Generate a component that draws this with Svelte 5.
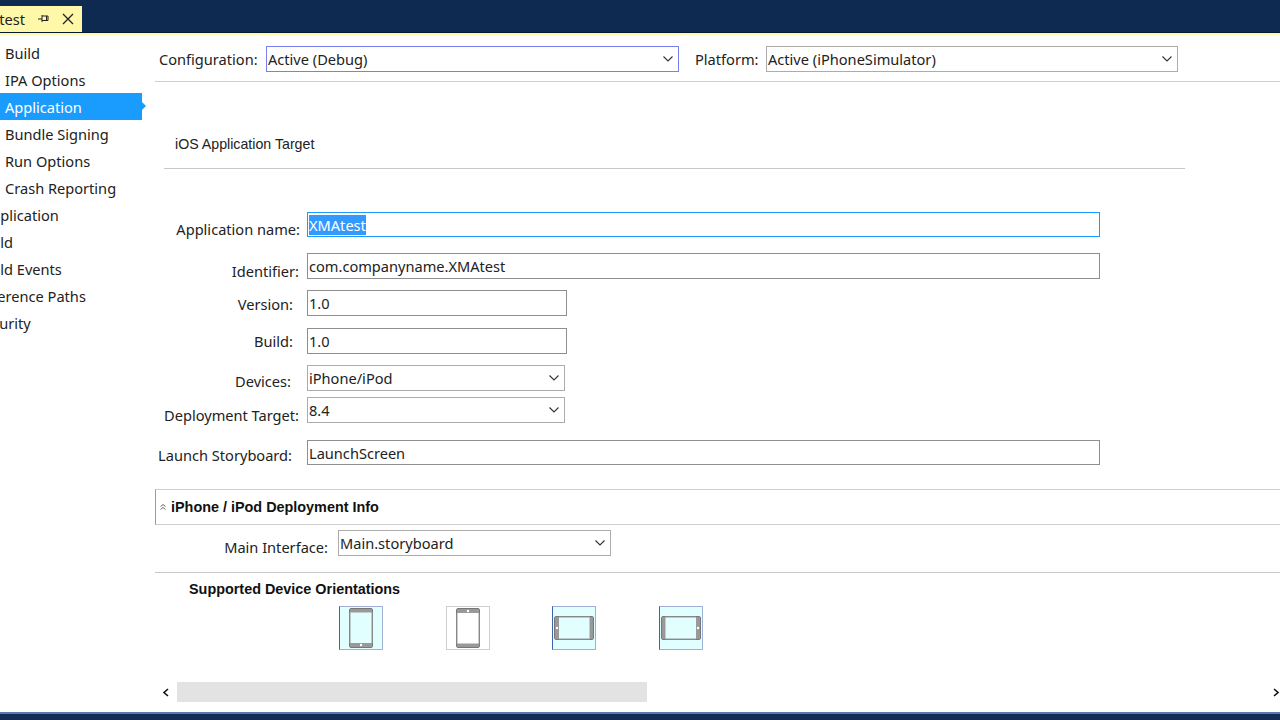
<script>
  const navTop = ['Build', 'IPA Options', 'Application', 'Bundle Signing', 'Run Options', 'Crash Reporting'];
  const navClipped = [
    { name: 'Application', cls: 'app' },
    { name: 'Build', cls: '' },
    { name: 'Build Events', cls: '' },
    { name: 'Reference Paths', cls: 'ref' },
    { name: 'Security', cls: 'sec' }
  ];
  const orientations = [
    { rotate: 0, on: true },
    { rotate: 180, on: false },
    { rotate: 90, on: true },
    { rotate: -90, on: true }
  ];
</script>

{#snippet chevron()}
  <svg class="chevron" width="10" height="6" viewBox="0 0 10 6" aria-hidden="true">
    <path d="M0.5 0.5 L5 5 L9.5 0.5" fill="none" stroke="#333" stroke-width="1.1" />
  </svg>
{/snippet}

<div class="page">
  <header class="titlebar">
    <div class="tab">
      <span class="tab-name"><span>XMAtest</span></span>
      <svg class="pin" width="12" height="10" viewBox="0 0 12 10" aria-hidden="true">
        <path d="M0 5 H4 M4 1 V8 M4 2 H10 V6.5 H4 M8.5 2 V6.5" fill="none" stroke="#222" stroke-width="1" />
      </svg>
      <svg class="close" width="12" height="12" viewBox="0 0 12 12" aria-hidden="true">
        <path d="M1 1 L11 11 M11 1 L1 11" fill="none" stroke="#222" stroke-width="1.3" />
      </svg>
    </div>
  </header>
  <div class="accent"></div>

  <div class="main">
    <nav class="sidebar">
      {#each navTop as item}
        <div class="nav-item" class:active={item === 'Application'}>{item}</div>
      {/each}
      {#each navClipped as item}
        <div class="nav-item clipped {item.cls}">{item.name}</div>
      {/each}
    </nav>

    <section class="content">
      <div class="config">
        <span class="config-label">Configuration:</span>
        <div class="field select config-select">Active (Debug){@render chevron()}</div>
        <span class="platform-label">Platform:</span>
        <div class="field select platform-select">Active (iPhoneSimulator){@render chevron()}</div>
      </div>

      <h2 class="target">iOS Application Target</h2>
      <div class="target-rule"></div>

      <div class="row r-name">
        <span class="label">Application name:</span>
        <div class="field wide selected-field"><span class="selection">XMAtest</span></div>
      </div>
      <div class="row r-identifier">
        <span class="label">Identifier:</span>
        <div class="field wide">com.companyname.XMAtest</div>
      </div>
      <div class="row r-version">
        <span class="label">Version:</span>
        <div class="field short-field">1.0</div>
      </div>
      <div class="row r-build">
        <span class="label">Build:</span>
        <div class="field short-field">1.0</div>
      </div>
      <div class="row r-devices">
        <span class="label">Devices:</span>
        <div class="field select combo">iPhone/iPod{@render chevron()}</div>
      </div>
      <div class="row r-target">
        <span class="label">Deployment Target:</span>
        <div class="field select combo">8.4{@render chevron()}</div>
      </div>
      <div class="row r-launch">
        <span class="label">Launch Storyboard:</span>
        <div class="field wide">LaunchScreen</div>
      </div>

      <div class="section-head">
        <svg width="6" height="6" viewBox="0 0 6 6" aria-hidden="true">
          <path d="M0.5 2.5 L3 0.5 L5.5 2.5 M0.5 5.5 L3 3.5 L5.5 5.5" fill="none" stroke="#555" stroke-width="0.9" />
        </svg>
        <strong>iPhone / iPod Deployment Info</strong>
      </div>

      <div class="row r-main">
        <span class="label">Main Interface:</span>
        <div class="field select main-select">Main.storyboard{@render chevron()}</div>
      </div>
      <div class="main-rule"></div>

      <h3 class="orient-title">Supported Device Orientations</h3>
      <div class="orient-row">
        {#each orientations as o}
          <div class="orient" class:on={o.on}>
            <svg width="42" height="42" viewBox="1 1 42 42" aria-hidden="true">
              <g transform={`rotate(${o.rotate} 22 22)`}>
                <rect x="10.5" y="2.5" width="23" height="39" rx="1.5" fill={o.on ? '#e1ffff' : '#fff'} stroke="#777" />
                <path d="M11 3 H33 V6.5 H11 Z M11 37 H33 V41 H11 Z" fill="#999" />
                <path d="M11 6 V37 M33 6 V37" stroke="#999" stroke-width="1" />
                <circle cx="22" cy="39" r="1.2" fill="#fff" />
              </g>
            </svg>
          </div>
        {/each}
      </div>

      <div class="scrollbar">
        <svg class="arrow" width="7" height="9" viewBox="0 0 7 9" aria-hidden="true">
          <path d="M6 1 L2 4.5 L6 8" fill="none" stroke="#111" stroke-width="1.6" />
        </svg>
        <div class="track"><div class="thumb"></div></div>
        <svg class="arrow" width="7" height="9" viewBox="0 0 7 9" aria-hidden="true">
          <path d="M1 1 L5 4.5 L1 8" fill="none" stroke="#111" stroke-width="1.6" />
        </svg>
      </div>
    </section>
  </div>

  <footer class="statusbar"></footer>
</div>

<style>
  :global(body) {
    margin: 0;
    background: #fff;
    font-family: 'Noto Sans', 'Open Sans', sans-serif;
    font-size: 14.6px;
    color: #222;
  }

  .page {
    width: 1280px;
    height: 720px;
    display: flex;
    flex-direction: column;
    overflow: hidden;
  }

  .titlebar {
    height: 33px;
    flex: none;
    background: #0e2a50;
    display: flex;
    align-items: flex-end;
    border-bottom: 1px solid #061a33;
    box-sizing: border-box;
  }

  .tab {
    width: 82px;
    height: 26px;
    background: #fff8a8;
    display: flex;
    align-items: center;
    flex: none;
  }

  .tab-name {
    width: 25px;
    overflow: hidden;
    display: flex;
    justify-content: flex-end;
    color: #222;
  }

  .pin {
    margin-left: 13px;
  }

  .close {
    margin-left: 12px;
  }

  .accent {
    height: 2px;
    flex: none;
    background: #fff8a8;
  }

  .main {
    flex: 1;
    display: flex;
    min-height: 0;
  }

  .sidebar {
    width: 142px;
    flex: none;
    padding-top: 4px;
  }

  .nav-item {
    height: 27px;
    line-height: 28px;
    padding-left: 5px;
    position: relative;
    white-space: nowrap;
    overflow: hidden;
  }

  .nav-item.clipped {
    padding-left: 0;
    text-indent: -22px;
    line-height: 29px;
  }

  .nav-item.app {
    text-indent: -18px;
  }

  .nav-item.ref {
    text-indent: -25px;
  }

  .nav-item.sec {
    text-indent: -24px;
  }

  .nav-item.active {
    background: #1a9cff;
    color: #fff;
    overflow: visible;
  }

  .nav-item.active::after {
    content: '';
    position: absolute;
    right: -4px;
    top: 9px;
    border-left: 4px solid #1a9cff;
    border-top: 4px solid transparent;
    border-bottom: 4px solid transparent;
  }

  .content {
    flex: 1;
    min-width: 0;
    margin-left: 13px;
    display: flex;
    flex-direction: column;
  }

  .config {
    height: 47px;
    flex: none;
    display: flex;
    align-items: flex-start;
    padding-top: 11px;
    padding-left: 4px;
    box-sizing: border-box;
    border-bottom: 1px solid #d0d0d0;
  }

  .config-label {
    width: 107px;
    flex: none;
    line-height: 27px;
  }

  .platform-label {
    width: 71px;
    flex: none;
    margin-left: 16px;
    line-height: 27px;
  }

  .field {
    box-sizing: border-box;
    height: 26px;
    border: 1px solid #8f8f8f;
    padding-left: 1px;
    background: #fff;
    flex: none;
    display: flex;
    align-items: center;
    white-space: nowrap;
  }

  .select {
    border-color: #acacac;
    justify-content: space-between;
    padding-right: 5px;
  }

  .config-select {
    width: 413px;
    border-color: #7a7ff0;
  }

  .platform-select {
    width: 412px;
  }

  .target {
    margin: 54px 0 0 20px;
    font: 400 14.2px/16px 'Liberation Sans', Arial, sans-serif;
    color: #222;
  }

  .target-rule {
    height: 1px;
    margin: 16px 95px 0 9px;
    background: #c8c8c8;
  }

  .row {
    display: flex;
    align-items: flex-start;
    height: 26px;
    flex: none;
  }

  .label {
    width: 152px;
    flex: none;
    text-align: right;
    box-sizing: border-box;
    line-height: 20px;
    white-space: nowrap;
  }

  .wide {
    width: 793px;
  }

  .short-field {
    width: 260px;
  }

  .combo {
    width: 258px;
  }

  .selected-field {
    border-color: #1a9cff;
    height: 25px;
  }

  .selection {
    background: #3399ff;
    color: #fff;
    line-height: 20px;
  }

  .r-name { margin-top: 43px; height: 25px; }
  .r-name .label { padding: 7px 7px 0 0; }
  .r-identifier { margin-top: 16px; }
  .r-identifier .label { padding: 8px 8px 0 0; }
  .r-version { margin-top: 11px; }
  .r-version .label { padding: 4px 14px 0 0; }
  .r-build { margin-top: 12px; }
  .r-build .label { padding: 3px 14px 0 0; }
  .r-devices { margin-top: 11px; }
  .r-devices .label { padding: 6px 16px 0 0; }
  .r-target { margin-top: 6px; }
  .r-target .label { padding: 8px 8px 0 0; }
  .r-launch { margin-top: 17px; height: 25px; }
  .r-launch .field { height: 25px; }
  .r-launch .label { padding: 5px 15px 0 0; }

  .section-head {
    margin-top: 24px;
    height: 36px;
    flex: none;
    box-sizing: border-box;
    border: 1px solid #cfcfcf;
    border-left-color: #9a9a9a;
    border-right: 0;
    display: flex;
    align-items: center;
    padding-left: 4px;
    gap: 5px;
  }

  .section-head strong {
    font: 700 14.4px/16px 'Liberation Sans', Arial, sans-serif;
    color: #111;
  }

  .r-main {
    margin-top: 5px;
  }

  .r-main .label {
    width: 183px;
    padding: 7px 10px 0 0;
  }

  .main-select {
    width: 273px;
  }

  .main-rule {
    height: 1px;
    flex: none;
    margin-top: 16px;
    background: #c8c8c8;
  }

  .orient-title {
    margin: 8px 0 0 34px;
    font: 700 14.4px/16px 'Liberation Sans', Arial, sans-serif;
    color: #111;
  }

  .orient-row {
    display: flex;
    gap: 62.6px;
    margin: 9px 0 0 184px;
    flex: none;
  }

  .orient {
    width: 44px;
    height: 44px;
    box-sizing: border-box;
    border: 1px solid #cfcfcf;
    background: #fff;
    display: flex;
    align-items: center;
    justify-content: center;
  }

  .orient.on {
    background: #e1ffff;
    border-color: #9fb0d4;
    border-left-color: #3f62a8;
  }

  .scrollbar {
    margin-top: 32px;
    height: 20px;
    flex: none;
    display: flex;
    align-items: center;
  }

  .arrow {
    flex: none;
    margin-left: 7px;
  }

  .track {
    flex: 1;
    height: 20px;
    margin: 0 9px 0 8px;
  }

  .thumb {
    width: 470px;
    height: 20px;
    background: #e3e3e3;
  }

  .statusbar {
    height: 8px;
    flex: none;
    background: #132c56;
    border-top: 2px solid #5a79ad;
    box-sizing: border-box;
  }
</style>
